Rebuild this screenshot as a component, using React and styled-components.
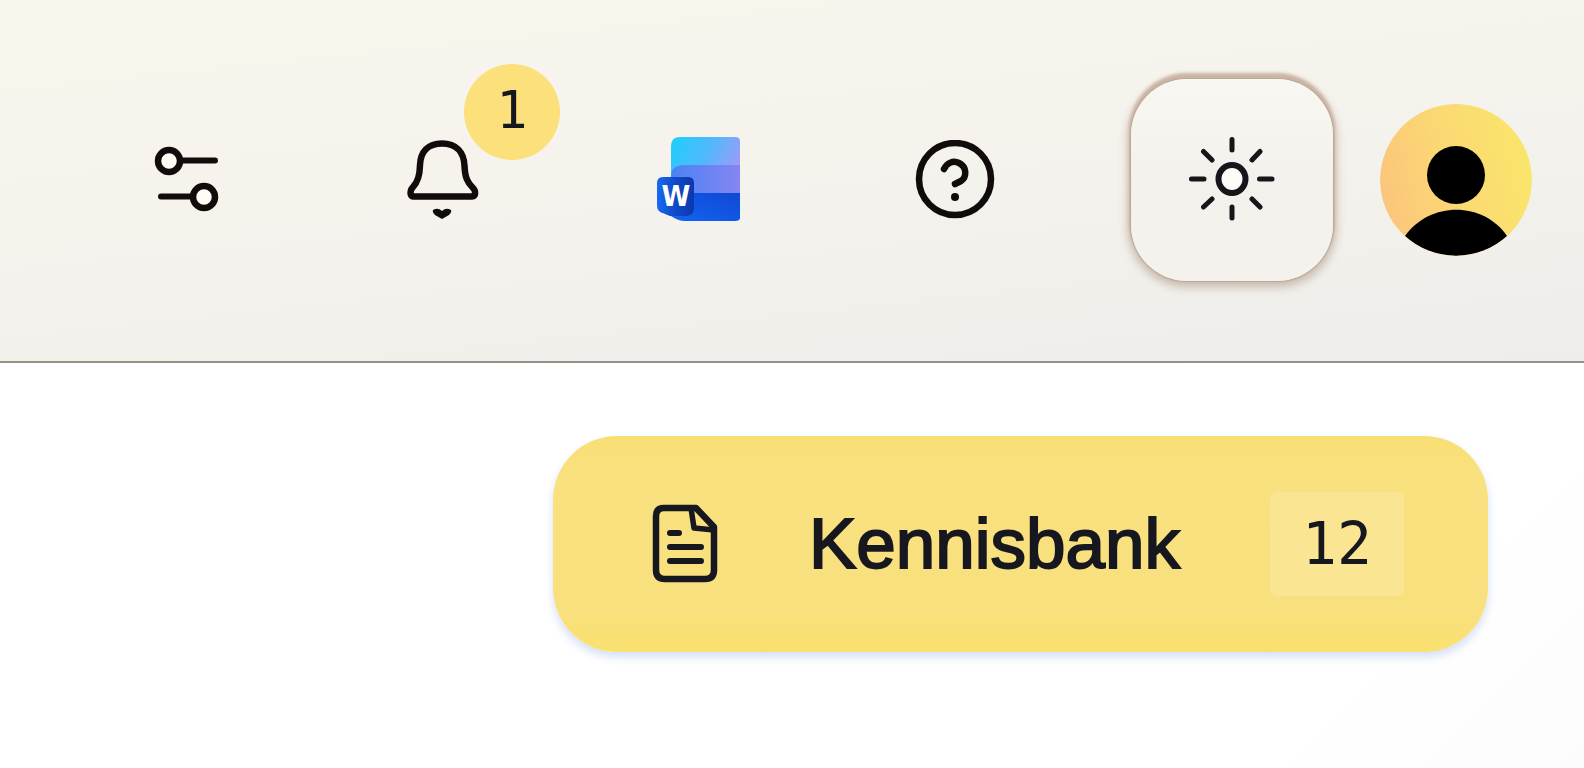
import React from "react";
import styled, { createGlobalStyle } from "styled-components";

const GlobalStyle = createGlobalStyle`
  *, *::before, *::after { box-sizing: border-box; }
  body {
    margin: 0;
    background: #fff;
    color: #17181f;
    font-family: "Liberation Sans", Arial, sans-serif;
  }
  button { font: inherit; color: inherit; cursor: pointer; }
`;

const Page = styled.div`
  min-height: 100vh;
  background: linear-gradient(135deg, #fff 86%, #fcfcfd);
`;

const Header = styled.header`
  display: flex;
  align-items: center;
  justify-content: flex-end;
  gap: 47px;
  padding: 79px 52px 80px;
  border-bottom: 2px solid #9a8f86;
  background: linear-gradient(174deg, #f8f6ec 0%, #f4f2ec 55%, #eeedea 100%);
`;

const Nav = styled.nav`
  display: flex;
  gap: 48px;
  margin-right: 25px;
`;

const IconButton = styled.button`
  position: relative;
  display: grid;
  place-items: center;
  width: 208px;
  height: 200px;
  padding: 0;
  border: 0;
  background: none;
  color: #120b0c;
`;

const Glyph = styled.svg`
  display: block;
  flex: none;
  width: ${(p) => p.$size}px;
  height: ${(p) => p.$size}px;
  fill: none;
  stroke: currentColor;
  stroke-width: 6.5;
  stroke-linecap: round;
  stroke-linejoin: round;
`;

const Badge = styled.span`
  position: absolute;
  top: -16px;
  right: -13px;
  width: 96px;
  height: 96px;
  border-radius: 50%;
  background: #fbe07c;
  color: #17181f;
  font: 52px/92px "DejaVu Sans Mono", monospace;
  text-align: center;
`;

const ThemeButton = styled.button`
  display: grid;
  place-items: center;
  width: 202px;
  height: 202px;
  padding: 0;
  border: 0;
  border-radius: 56px;
  background: linear-gradient(#f8f7f1, #f3f1ec 50%, #f3f2ed);
  color: #17151a;
  box-shadow:
    0 0 1px 1px #bda595,
    0 -4px 3px 2px #ccb5a5,
    0 3px 10px 3px #c6b8ac;
`;

const AvatarButton = styled.button`
  width: 152px;
  height: 152px;
  padding: 0;
  border: 0;
  border-radius: 50%;
  overflow: hidden;
  background: none;
`;

const Main = styled.main`
  display: flex;
  justify-content: flex-end;
  padding: 73px 96px;
`;

const KnowledgeButton = styled.button`
  display: flex;
  align-items: center;
  height: 216px;
  padding: 0 84px 0 92px;
  border: 0;
  border-radius: 64px;
  background: linear-gradient(#f8df74, #f9e180 20%, #f8e07e 80%, #f9e170);
  box-shadow: 0 5px 10px #d5def6;
`;

const Label = styled.span`
  margin: 0 90px 0 84px;
  font-size: 71px;
  line-height: 84px;
  -webkit-text-stroke: 2px currentColor;
`;

const Count = styled.span`
  width: 134px;
  border-radius: 8px;
  background: #fae692;
  font: 58px/104px "DejaVu Sans Mono", monospace;
  text-align: center;
`;

const SlidersIcon = () => (
  <Glyph $size={80} viewBox="0 0 80 80" aria-hidden="true">
    <path d="M34 20.500H68M46 56.500H14" strokeWidth="6" />
    <circle cx="22" cy="21" r="11" fill="#fffdf6" />
    <circle cx="57" cy="57" r="11" fill="#fffdf6" />
  </Glyph>
);

const BellIcon = () => (
  <Glyph $size={80} viewBox="0 0 80 80" aria-hidden="true">
    <path d="M39 3.500C25 3.500 17.500 12 17 25C16.800 36 15 42 10 47C7 50 6.500 56 10 56.500H69C73 56.500 73 51 70 48C64 42 62 37 61.500 26C61 12 53 3.500 39 3.500Z" />
    <path d="M30 70Q35 67 39 71Q43 67 48 70Q49 72 46 75L39 79L32 75Q29 72 30 70Z" fill="currentColor" stroke="none" />
  </Glyph>
);

const WordLogo = () => (
  <Glyph $size={88} viewBox="0 0 88 88" aria-hidden="true">
    <defs>
      <linearGradient id="sky" x1="0" y1="0.300" x2="1" y2="0.600">
        <stop offset="0" stopColor="#24ccfc" />
        <stop offset="0.500" stopColor="#50b8fc" />
        <stop offset="1" stopColor="#9c9cf8" />
      </linearGradient>
      <linearGradient id="violet" x1="0" x2="1">
        <stop offset="0" stopColor="#4a83f4" />
        <stop offset="1" stopColor="#8585f3" />
      </linearGradient>
      <linearGradient id="royal" x1="0" x2="1" y1="1" y2="0">
        <stop offset="0" stopColor="#1268f2" />
        <stop offset="1" stopColor="#1047d4" />
      </linearGradient>
      <linearGradient id="tile" x1="0" x2="1">
        <stop offset="0" stopColor="#176af0" />
        <stop offset="0.500" stopColor="#1148c8" />
        <stop offset="1" stopColor="#0b38ad" />
      </linearGradient>
    </defs>
    <g stroke="none">
      <path d="M25 1H80Q85 1 85 5V42H16V10Q16 1 25 1Z" fill="url(#sky)" />
      <path d="M16 40Q16 30 28 29H85V58H16Z" fill="url(#violet)" />
      <path d="M15 57H85V82Q85 85 80 85H30Q23 85 16 80L5 76V60Z" fill="url(#royal)" />
      <path d="M8 41H33Q39 41 39 47V72Q39 80 30 80H15L6 76Q2 75 2 69V47Q2 41 8 41Z" fill="url(#tile)" />
      <text x="21" y="70" fill="#fff" textAnchor="middle" fontFamily="DejaVu Sans Condensed, DejaVu Sans, sans-serif" fontWeight="700" fontSize="29">W</text>
    </g>
  </Glyph>
);

const HelpIcon = () => (
  <Glyph $size={80} viewBox="0 0 80 80" aria-hidden="true">
    <circle cx="40" cy="39" r="36" />
    <path d="M29 29C32 23 38 20 44 23C52 27 52 37 46 41L40 44" />
    <circle cx="40" cy="57" r="4" fill="currentColor" stroke="none" />
  </Glyph>
);

const SunIcon = () => (
  <Glyph $size={88} viewBox="0 0 88 88" aria-hidden="true">
    <ellipse cx="44" cy="43" rx="13.500" ry="14" strokeWidth="6" fill="#fdfcf8" />
    <path strokeWidth="5" d="M44 3.500V14M44 71V82M3.500 43H16M71.500 43H84M15.500 15.500L24 24M72 15.500L64 24M15.500 71L24 63M72 71L64 63" />
  </Glyph>
);

const FileIcon = () => (
  <Glyph $size={80} viewBox="0 0 80 80" aria-hidden="true">
    <path d="M19 4H51L69 23V66Q69 75 60 75H20Q11 75 11 66V12Q11 4 19 4Z" />
    <path d="M46 4L49 24L69 26" strokeWidth="5.500" />
    <path d="M25 29H34M25 43H56M25 57H56" strokeWidth="6" />
  </Glyph>
);

const AvatarPicture = () => (
  <Glyph $size={152} viewBox="0 0 152 152" aria-hidden="true">
    <defs>
      <linearGradient id="skin" x1="0" y1="0.700" x2="1" y2="0.450">
        <stop offset="0" stopColor="#fbc47c" />
        <stop offset="0.450" stopColor="#fbd774" />
        <stop offset="1" stopColor="#fae56b" />
      </linearGradient>
    </defs>
    <g stroke="none">
      <circle cx="76" cy="76" r="76" fill="url(#skin)" />
      <circle cx="76" cy="71" r="29" fill="#000" />
      <path d="M25 132C50 97 103 97 127 132A76 76 0 0 1 25 132Z" fill="#000" />
    </g>
  </Glyph>
);

export default function App() {
  return (
    <Page>
      <GlobalStyle />
      <Header>
        <Nav>
          <IconButton type="button" aria-label="Filters"><SlidersIcon /></IconButton>
          <IconButton type="button" aria-label="Notifications">
            <BellIcon />
            <Badge>1</Badge>
          </IconButton>
          <IconButton type="button" aria-label="Word"><WordLogo /></IconButton>
          <IconButton type="button" aria-label="Help"><HelpIcon /></IconButton>
        </Nav>
        <ThemeButton type="button" aria-label="Theme"><SunIcon /></ThemeButton>
        <AvatarButton type="button" aria-label="Account"><AvatarPicture /></AvatarButton>
      </Header>
      <Main>
        <KnowledgeButton type="button">
          <FileIcon />
          <Label>Kennisbank</Label>
          <Count>12</Count>
        </KnowledgeButton>
      </Main>
    </Page>
  );
}
